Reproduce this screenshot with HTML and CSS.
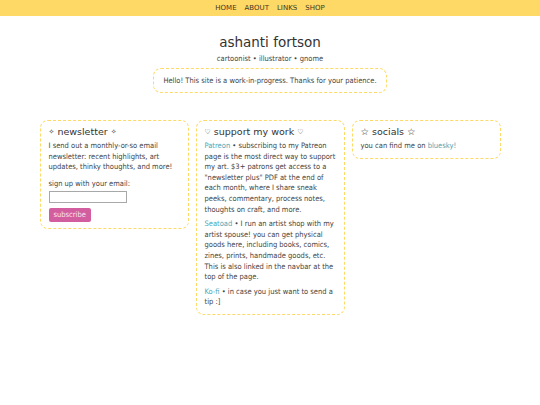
FILE: index.html
```html
<!DOCTYPE html>
<html>
<head>
<meta charset="utf-8">
<link rel="stylesheet" href="styles.css">
</head>
<body>
<nav class="nav">
  <a href="#">HOME</a>
  <a href="#">ABOUT</a>
  <a href="#">LINKS</a>
  <a href="#">SHOP</a>
</nav>
<header class="header">
  <h1 class="title">ashanti fortson</h1>
  <p class="subtitle">cartoonist • illustrator • gnome</p>
  <div class="notice">Hello! This site is a work-in-progress. Thanks for your patience.</div>
</header>
<main class="cards">
  <section class="card">
    <h2 class="card-title"><span class="sym">✧</span> newsletter <span class="sym">✧</span></h2>
    <p>I send out a monthly-or-so email newsletter: recent highlights, art updates, thinky thoughts, and more!</p>
    <p class="label">sign up with your email:</p>
    <input class="email" type="text">
    <button class="subscribe">subscribe</button>
  </section>
  <section class="card">
    <h2 class="card-title"><span class="sym">♡</span> support my work <span class="sym">♡</span></h2>
    <p><a href="#">Patreon</a> • subscribing to my Patreon page is the most direct way to support my art. $3+ patrons get access to a "newsletter plus" PDF at the end of each month, where I share sneak peeks, commentary, process notes, thoughts on craft, and more.</p>
    <p><a href="#">Seatoad</a> • I run an artist shop with my artist spouse! you can get physical goods here, including books, comics, zines, prints, handmade goods, etc. This is also linked in the navbar at the top of the page.</p>
    <p><a href="#">Ko-fi</a> • in case you just want to send a tip :]</p>
  </section>
  <section class="card">
    <h2 class="card-title">☆ socials ☆</h2>
    <p>you can find me on <a href="#">bluesky!</a></p>
  </section>
</main>
</body>
</html>
```
FILE: styles.css
```css
html, body {
  margin: 0;
  padding: 0;
  background: #fff;
  font-family: "DejaVu Sans", Verdana, sans-serif;
  color: #333;
}
.nav {
  background: #ffd966;
  height: 16px;
  display: flex;
  justify-content: center;
  align-items: center;
  gap: 8px;
}
.nav a {
  font-size: 7px;
  color: #3f3620;
  text-decoration: none;
}
.header {
  display: flex;
  flex-direction: column;
  align-items: center;
  padding-top: 17px;
}
.title {
  margin: 0;
  font-size: 13.5px;
  font-weight: normal;
  color: #333;
  line-height: 18px;
}
.subtitle,
.notice,
.card p,
.subscribe {
  font-family: "DejaVu Sans Condensed", "DejaVu Sans", sans-serif;
  font-stretch: semi-condensed;
}
.subtitle {
  margin: 3px 0 0;
  font-size: 7.5px;
  color: #444;
  line-height: 10px;
}
.notice {
  margin-top: 4px;
  border: 1px dashed #ffd966;
  border-radius: 8px;
  padding: 7px 9px;
  font-size: 7.5px;
  color: #444;
  line-height: 9px;
}
.cards {
  display: flex;
  justify-content: center;
  align-items: flex-start;
  gap: 7px;
  margin-top: 27px;
}
.card {
  width: 131px;
  border: 1px dashed #ffd966;
  border-radius: 8px;
  padding: 4px 8px 6px;
  font-size: 7.5px;
  line-height: 10.6px;
  color: #444;
}
.card-title {
  margin: 0 0 2px;
  font-size: 9.5px;
  font-weight: normal;
  line-height: 14px;
  color: #333;
}
.sym {
  font-size: 7px;
  vertical-align: 1px;
}
.card p {
  margin: 0 0 4px;
}
.card p:last-child {
  margin-bottom: 0;
}
.card p.label {
  margin: 6px 0 2px;
}
.card a {
  color: #4aa8b8;
  text-decoration: none;
}
.email {
  display: block;
  box-sizing: border-box;
  width: 78px;
  height: 12px;
  border: 1px solid #a8a8a8;
  padding: 1px 2px;
  margin: 0 0 5px;
}
.subscribe {
  display: block;
  background: #d35e9f;
  color: #fbe3ef;
  border: none;
  border-radius: 2px;
  font-size: 7.5px;
  padding: 2px 5px;
  line-height: 10px;
  height: 14px;
}
```
